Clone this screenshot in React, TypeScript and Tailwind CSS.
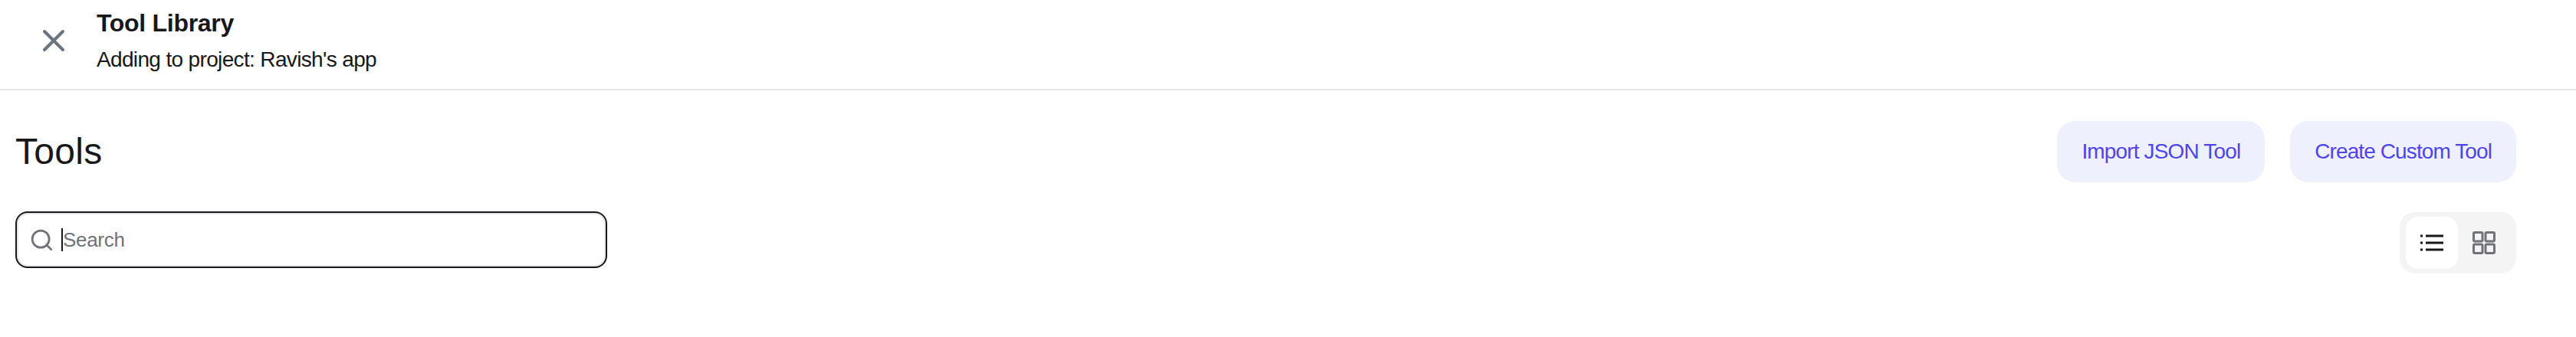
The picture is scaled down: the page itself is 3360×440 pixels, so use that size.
import { Search, X } from "lucide-react";

const App = () => {
  return (
    <div className="min-h-[440px] bg-white font-['Liberation_Sans',Arial,sans-serif] text-[#18181b]">
      <header className="flex h-[118px] items-start border-b-2 border-[#e5e7eb] pl-[46px]">
        <X className="mt-[29px] h-[48px] w-[48px] text-[#6b7280]" strokeWidth={2} />
        <div className="mt-[14px] ml-[32px] flex flex-col gap-[16px]">
          <h1 className="text-[32px] leading-[32px] font-bold tracking-[-0.3px]">Tool Library</h1>
          <p className="text-[28px] leading-[32px] tracking-[-0.65px]">Adding to project: Ravish's app</p>
        </div>
      </header>

      <main className="pt-[40px] pr-[78px] pl-[20px]">
        <div className="flex h-[80px] items-center justify-between">
          <h2 className="text-[48px] leading-none tracking-[0.3px]">Tools</h2>
          <div className="flex gap-[33px]">
            <button className="h-[80px] rounded-[24px] bg-[#eef0fe] px-[32px] text-[28px] tracking-[-0.85px] text-[#4f46e5]">
              Import JSON Tool
            </button>
            <button className="h-[80px] rounded-[24px] bg-[#eef0fe] px-[32px] text-[28px] tracking-[-0.9px] text-[#4f46e5]">
              Create Custom Tool
            </button>
          </div>
        </div>

        <div className="mt-[38px] flex items-start justify-between">
          <div className="flex h-[74px] w-[772px] items-center rounded-[16px] border-2 border-[#18181b] pl-[16px] shadow-[inset_0_0_0_2px_#e5e7eb]">
            <Search className="h-[33px] w-[33px] text-[#71717a]" strokeWidth={2} />
            <span className="ml-[9px] h-[30px] w-[2px] bg-[#18181b]" />
            <input
              placeholder="Search"
              className="min-w-0 flex-1 bg-transparent text-[26px] tracking-[-0.3px] outline-none placeholder:text-[#71717a]"
            />
          </div>

          <div className="mt-[1px] flex h-[80px] w-[152px] rounded-[20px] bg-[#f4f4f5] p-[6px] pl-[8px]">
            <div className="flex h-[68px] w-[68px] items-center justify-center rounded-[16px] bg-white">
              <svg width="30" height="30" viewBox="0 0 30 30" fill="none" stroke="#18181b" strokeWidth="3">
                <path d="M7 6h23M7 15h23M7 24h23" />
                <path d="M0 6h3M0 15h3M0 24h3" />
              </svg>
            </div>
            <div className="flex h-[68px] w-[68px] items-center justify-center">
              <svg width="30" height="30" viewBox="0 0 30 30" fill="none" stroke="#71717a" strokeWidth="3">
                <rect x="1.5" y="1.5" width="11.5" height="11.5" rx="1.5" />
                <rect x="17" y="1.5" width="11.5" height="11.5" rx="1.5" />
                <rect x="1.5" y="17" width="11.5" height="11.5" rx="1.5" />
                <rect x="17" y="17" width="11.5" height="11.5" rx="1.5" />
              </svg>
            </div>
          </div>
        </div>
      </main>
    </div>
  );
};

export default App;
